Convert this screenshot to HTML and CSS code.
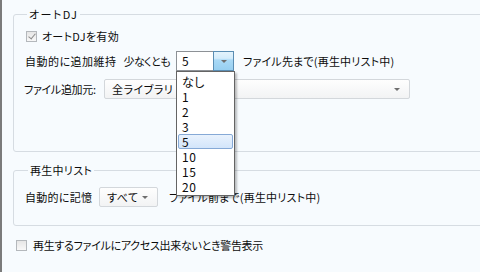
FILE: index.html
```html
<!DOCTYPE html>
<html lang="ja">
<head>
<meta charset="utf-8">
<link rel="stylesheet" href="styles.css">
</head>
<body>
<div class="page">
  <fieldset class="group group-dj">
    <legend class="lg-dj">オートDJ</legend>
    <div class="row row-check">
      <span class="checkbox checked"></span>
      <span class="lbl">オートDJを有効</span>
    </div>
    <div class="row row-keep">
      <span class="lbl-wide">
        <span class="t-keep">自動的に追加維持</span>
        <span class="t-least">少なくとも</span>
      </span>
      <div class="combo combo-open">
        <span class="combo-text">5</span>
        <span class="combo-btn"><span class="arrow"></span></span>
        <ul class="droplist">
          <li>なし</li>
          <li>1</li>
          <li>2</li>
          <li>3</li>
          <li class="sel">5</li>
          <li>10</li>
          <li>15</li>
          <li>20</li>
        </ul>
      </div>
      <span class="after">ファイル先まで(再生中リスト中)</span>
    </div>
    <div class="row row-source">
      <span class="lbl-src">ファイル追加元:</span>
      <div class="combo combo-flat combo-lib">
        <span class="combo-text">全ライブラリ</span>
        <span class="arrow"></span>
      </div>
    </div>
  </fieldset>

  <fieldset class="group group-np">
    <legend>再生中リスト</legend>
    <div class="row row-remember">
      <span class="lbl-rem">自動的に記憶</span>
      <div class="combo combo-flat combo-all">
        <span class="combo-text">すべて</span>
        <span class="arrow"></span>
      </div>
      <span class="after after-np">ファイル前まで(再生中リスト中)</span>
    </div>
  </fieldset>

  <div class="row row-warn">
    <span class="checkbox"></span>
    <span class="lbl">再生するファイルにアクセス出来ないとき警告表示</span>
  </div>
</div>
</body>
</html>
```

FILE: styles.css
```css
html, body {
  margin: 0;
  padding: 0;
  width: 480px;
  height: 272px;
  overflow: hidden;
}

body {
  background: #f7fbfe;
  border-left: 2px solid #7b7b7b;
  box-sizing: border-box;
  font-family: "Noto Sans CJK JP", "Noto Sans", sans-serif;
  font-size: 11px;
  letter-spacing: 0.3px;
  font-feature-settings: "palt";
  color: #0c0c0c;
  white-space: nowrap;
}

.page {
  padding-left: 11px;
  display: flex;
  flex-direction: column;
}

.group {
  margin: 7px 0 0 0;
  padding: 0 0 0 11px;
  width: 480px;
  border: 1px solid #d6dce2;
  border-radius: 3px;
  display: flex;
  flex-direction: column;
  min-width: 0;
}

.group legend {
  padding: 0 2px;
  margin-left: 2px;
  height: 14px;
  line-height: 14px;
}

.group legend.lg-dj {
  letter-spacing: 1.4px;
}

.group-dj {
  padding-bottom: 52px;
}

.group-np {
  margin-top: 11px;
  padding-bottom: 18px;
}

.group-np legend {
  margin-left: 3px;
}

.row {
  display: flex;
  align-items: center;
  line-height: 14px;
}

.row-check {
  height: 16px;
  margin-top: 7px;
  padding-left: 1px;
}

.row-check .lbl {
  margin-left: 5px;
}

.checkbox {
  width: 11px;
  height: 11px;
  box-sizing: border-box;
  border: 1px solid #b4b8bc;
  background: linear-gradient(#e6e6e6, #f8f8f8);
  position: relative;
  flex: none;
}

.checkbox.checked::after {
  content: "";
  position: absolute;
  left: 3px;
  top: 0px;
  width: 3px;
  height: 6px;
  border-right: 1.5px solid #8c8c8c;
  border-bottom: 1.5px solid #8c8c8c;
  transform: rotate(40deg);
}

.row-keep {
  margin-top: 7px;
  height: 20px;
}

.lbl-wide {
  width: 151px;
  flex: none;
  display: flex;
  justify-content: space-between;
  padding-right: 6px;
  box-sizing: border-box;
}

.t-keep {
  letter-spacing: 0.5px;
}

.t-least {
  letter-spacing: -0.6px;
}

.combo {
  position: relative;
  height: 20px;
  box-sizing: border-box;
  display: flex;
  align-items: center;
  flex: none;
  letter-spacing: 0.5px;
}

.combo-open {
  width: 58px;
  border: 1px solid #8d9196;
  border-right: none;
  background: #ffffff;
}

.combo-open .combo-text {
  padding-left: 5px;
  flex: 1;
  font-size: 12px;
}

.combo-btn {
  width: 21px;
  height: 20px;
  margin-top: -1px;
  margin-bottom: -1px;
  box-sizing: border-box;
  border: 1px solid #5a8db3;
  background: linear-gradient(#e4f3fc 0%, #d4ecfb 35%, #a9d9f6 45%, #97cff1 100%);
  display: flex;
  align-items: center;
  justify-content: center;
}

.arrow {
  width: 0;
  height: 0;
  border-left: 3px solid transparent;
  border-right: 3px solid transparent;
  border-top: 3px solid #6e6e6e;
}

.droplist {
  position: absolute;
  left: -1px;
  top: 19px;
  width: 59px;
  margin: 0;
  padding: 2px 1px 1px 1px;
  list-style: none;
  box-sizing: border-box;
  background: #ffffff;
  border: 1px solid #646464;
  box-shadow: 2px 2px 2px rgba(0, 0, 0, 0.25);
  z-index: 2;
  font-size: 12px;
  letter-spacing: 0.5px;
}

.droplist li {
  height: 15px;
  line-height: 15px;
  padding-left: 4px;
  box-sizing: border-box;
}

.droplist li.sel {
  border: 1px solid #86a9d6;
  border-radius: 2px;
  background: linear-gradient(#e9f2fd, #d3e5fa);
  padding-left: 3px;
  line-height: 13px;
}

.after {
  margin-left: 9px;
  letter-spacing: 0.2px;
}

.row-source {
  margin-top: 8px;
  height: 20px;
}

.lbl-src {
  width: 80px;
  flex: none;
  margin-left: -1px;
  box-sizing: border-box;
  letter-spacing: -0.3px;
}

.combo-flat {
  border: 1px solid #d3d7db;
  border-radius: 2px;
  background: linear-gradient(#fefefe, #f2f3f4);
  justify-content: space-between;
  padding: 0 9px 0 7px;
}

.combo-lib {
  width: 306px;
}

.combo-all {
  width: 59px;
  padding-right: 9px;
}

.row-remember {
  margin-top: 10px;
  height: 20px;
}

.lbl-rem {
  width: 74px;
  flex: none;
  box-sizing: border-box;
}

.after-np {
  margin-left: 11px;
}

.row-warn {
  margin-top: 13px;
  height: 12px;
  padding-left: 3px;
}

.row-warn .lbl {
  margin-left: 6px;
  letter-spacing: -0.3px;
}
```
